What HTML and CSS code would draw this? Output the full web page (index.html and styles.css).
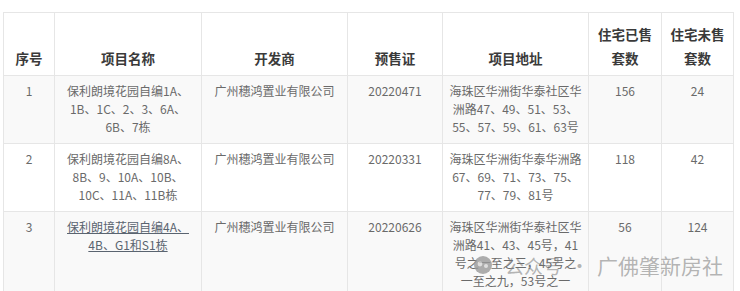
FILE: index.html
```html
<!DOCTYPE html>
<html>
<head>
    <meta charset="utf-8">
    <link rel="stylesheet" href="styles.css">
</head>
<body>
<div class="wrap">
  <table class="sales">
    <colgroup>
      <col style="width:51px">
      <col style="width:147px">
      <col style="width:146px">
      <col style="width:95px">
      <col style="width:146px">
      <col style="width:73px">
      <col style="width:72px">
    </colgroup>
    <thead>
      <tr>
        <th>序号</th>
        <th>项目名称</th>
        <th>开发商</th>
        <th>预售证</th>
        <th>项目地址</th>
        <th>住宅已售套数</th>
        <th>住宅未售套数</th>
      </tr>
    </thead>
    <tbody>
      <tr class="shade">
        <td>1</td>
        <td>保利朗境花园自编1A、1B、1C、2、3、6A、6B、7栋</td>
        <td>广州穗鸿置业有限公司</td>
        <td>20220471</td>
        <td>海珠区华洲街华泰社区华洲路47、49、51、53、55、57、59、61、63号</td>
        <td>156</td>
        <td>24</td>
      </tr>
      <tr>
        <td>2</td>
        <td>保利朗境花园自编8A、8B、9、10A、10B、10C、11A、11B栋</td>
        <td>广州穗鸿置业有限公司</td>
        <td>20220331</td>
        <td>海珠区华洲街华泰华洲路67、69、71、73、75、77、79、81号</td>
        <td>118</td>
        <td>42</td>
      </tr>
      <tr class="shade last">
        <td>3</td>
        <td><a href="#">保利朗境花园自编4A、4B、G1和S1栋</a></td>
        <td>广州穗鸿置业有限公司</td>
        <td>20220626</td>
        <td>海珠区华洲街华泰社区华洲路41、43、45号，41号之一至之三，45号之一至之九，53号之一</td>
        <td>56</td>
        <td>124</td>
      </tr>
    </tbody>
  </table>

  <div class="mark">
    <svg width="20" height="20" viewBox="0 0 20 20"><circle cx="10" cy="10" r="9" fill="#9a9a9a"/><circle cx="7" cy="9" r="2.4" fill="#d8d8d8"/><circle cx="13" cy="11" r="2" fill="#d8d8d8"/></svg>
    <span class="pub">公众号</span>
    <span class="dot">·</span>
    <span class="name">广佛肇新房社</span>
  </div>
</div>
</body>
</html>
```

FILE: styles.css
```css
body{
  margin: 0;
  background-color: #fff;
  font-family: "Noto Sans CJK SC", "Noto Sans", sans-serif;
}

.wrap{
  position: relative;
  padding: 12px 0 0 3px;
  height: 279px;
  overflow: hidden;
}

.sales{
  border-collapse: collapse;
  table-layout: fixed;
  width: 731px;
  border: 1px solid #e3e3e3;
}

.sales th, .sales td{
  border: 1px solid #e6e6e6;
  text-align: center;
}

.sales th{
  font-size: 13.5px;
  line-height: 24px;
  font-weight: bold;
  color: #3a3a3a;
  vertical-align: bottom;
  padding: 9px 8px 5px;
  height: 48px;
}

.sales td{
  font-size: 12px;
  line-height: 18px;
  color: #6a6a6a;
  vertical-align: top;
  padding: 6px 6px 7px;
}

.sales tr.shade td{
  background-color: #f9f9f9;
}

.sales tr.last td{
  height: 120px;
}

.sales a{
  color: #5a6470;
  text-decoration: underline;
}

.mark{
  position: absolute;
  left: 473px;
  top: 250px;
  display: flex;
  align-items: center;
  gap: 4px;
  color: rgba(120,120,120,0.55);
  white-space: nowrap;
}

.mark svg{
  opacity: 0.8;
}

.mark .pub{
  font-size: 19px;
  margin-left: 8px;
}

.mark .dot{
  font-size: 19px;
  margin: 0 4px;
}

.mark .name{
  font-size: 21px;
}
```
